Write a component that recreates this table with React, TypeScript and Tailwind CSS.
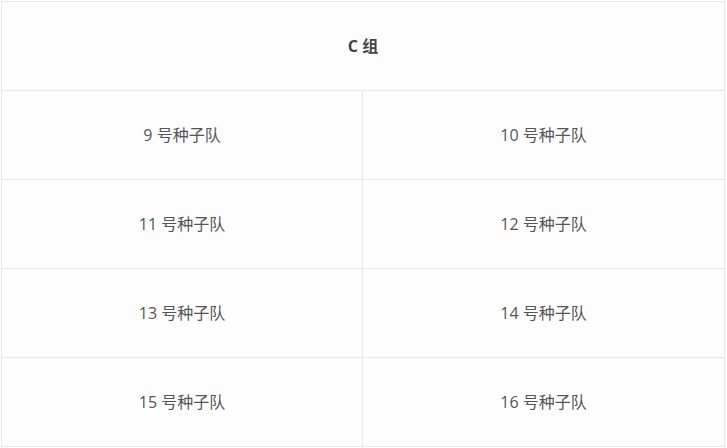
const rows = [
  ["9 号种子队", "10 号种子队"],
  ["11 号种子队", "12 号种子队"],
  ["13 号种子队", "14 号种子队"],
  ["15 号种子队", "16 号种子队"],
];

export default function App() {
  return (
    <div
      className="w-[727px] h-[448px] bg-white pl-px pt-px"
      style={{ fontFamily: '"Segoe UI", "Open Sans", "Noto Sans CJK SC", sans-serif' }}
    >
      <div className="w-[724px] border border-[#e8e8e8] bg-[#fdfdfe] text-[16px] text-[#555]">
        <div className="h-[89px] border-b border-[#e8e8e8] flex items-center justify-center font-bold text-[#444]">
          C 组
        </div>
        {rows.map(([a, b]) => (
          <div key={a} className="flex border-b border-[#e8e8e8] last:border-b-0">
            <div className="w-[361px] h-[88px] border-r border-[#e8e8e8] flex items-center justify-center">
              {a}
            </div>
            <div className="flex-1 h-[88px] flex items-center justify-center">{b}</div>
          </div>
        ))}
      </div>
    </div>
  );
}
